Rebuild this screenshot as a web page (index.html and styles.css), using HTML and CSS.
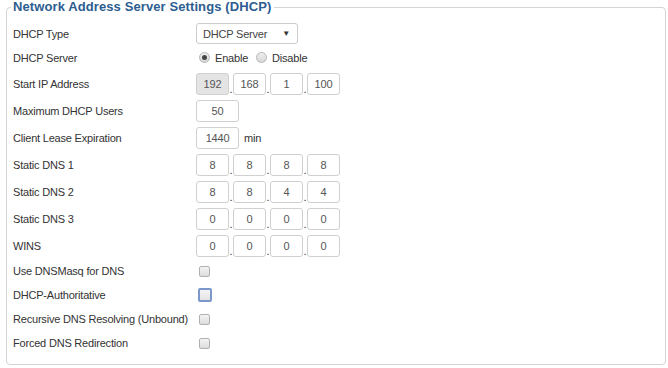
FILE: index.html
```html
<!DOCTYPE html>
<html lang="en">
<head>
    <meta charset="UTF-8">
    <title>DHCP Settings</title>
    <link rel="stylesheet" href="styles.css">
</head>
<body>
    <fieldset class="settings">
        <legend>Network Address Server Settings (DHCP)</legend>

        <div class="row row-select">
            <span class="label">DHCP Type</span>
            <div class="select"><span>DHCP Server</span><span class="arrow">&#9660;</span></div>
        </div>

        <div class="row row-radio">
            <span class="label">DHCP Server</span>
            <span class="radio checked"></span><span class="opt">Enable</span>
            <span class="radio"></span><span class="opt">Disable</span>
        </div>

        <div class="row row-input">
            <span class="label">Start IP Address</span>
            <span class="box disabled">192</span><span class="dot">.</span>
            <span class="box">168</span><span class="dot">.</span>
            <span class="box">1</span><span class="dot">.</span>
            <span class="box">100</span>
        </div>

        <div class="row row-input">
            <span class="label">Maximum DHCP Users</span>
            <span class="box wide">50</span>
        </div>

        <div class="row row-input">
            <span class="label">Client Lease Expiration</span>
            <span class="box wide">1440</span><span class="unit">min</span>
        </div>

        <div class="row row-input">
            <span class="label">Static DNS 1</span>
            <span class="box">8</span><span class="dot">.</span>
            <span class="box">8</span><span class="dot">.</span>
            <span class="box">8</span><span class="dot">.</span>
            <span class="box">8</span>
        </div>

        <div class="row row-input">
            <span class="label">Static DNS 2</span>
            <span class="box">8</span><span class="dot">.</span>
            <span class="box">8</span><span class="dot">.</span>
            <span class="box">4</span><span class="dot">.</span>
            <span class="box">4</span>
        </div>

        <div class="row row-input">
            <span class="label">Static DNS 3</span>
            <span class="box">0</span><span class="dot">.</span>
            <span class="box">0</span><span class="dot">.</span>
            <span class="box">0</span><span class="dot">.</span>
            <span class="box">0</span>
        </div>

        <div class="row row-input">
            <span class="label">WINS</span>
            <span class="box">0</span><span class="dot">.</span>
            <span class="box">0</span><span class="dot">.</span>
            <span class="box">0</span><span class="dot">.</span>
            <span class="box">0</span>
        </div>

        <div class="row row-check">
            <span class="label">Use DNSMasq for DNS</span>
            <span class="check"></span>
        </div>

        <div class="row row-check">
            <span class="label">DHCP-Authoritative</span>
            <span class="check focused"></span>
        </div>

        <div class="row row-check">
            <span class="label">Recursive DNS Resolving (Unbound)</span>
            <span class="check"></span>
        </div>

        <div class="row row-check">
            <span class="label">Forced DNS Redirection</span>
            <span class="check"></span>
        </div>
    </fieldset>
</body>
</html>
```

FILE: styles.css
```css
/* Page */
body {
    margin: 0;
    background: #fff;
    font-family: "Liberation Sans", Arial, sans-serif;
    font-size: 11px;
    letter-spacing: -0.2px;
    color: #333;
}

/* Fieldset box */
.settings {
    margin: 0 2px 0 6px;
    padding: 8px 0 10px 0;
    height: 365px;
    box-sizing: border-box;
    border: 1px solid #d4d4d4;
    border-radius: 4px;
}

.settings legend {
    margin-left: 4px;
    padding: 0 3px 0 2px;
    font-weight: bold;
    font-size: 13px;
    letter-spacing: 0.1px;
    line-height: 14px;
    color: #2d5d8f;
}

/* Rows */
.row {
    display: flex;
    align-items: center;
    padding-left: 6px;
    white-space: nowrap;
}

.row-select { height: 23px; }
.row-radio { height: 25px; }
.row-input { height: 27px; }
.row-check { height: 24px; }

.label {
    width: 183px;
    flex-shrink: 0;
}

/* Fake select */
.select {
    width: 87px;
    height: 19px;
    border: 1px solid #ccc;
    border-radius: 3px;
    display: flex;
    align-items: center;
    justify-content: space-between;
    padding: 0 7px 0 6px;
    color: #444;
}

.select .arrow {
    font-size: 8px;
    color: #333;
}

/* Radios */
.radio {
    width: 9px;
    height: 9px;
    border: 1px solid #b5b5b5;
    border-radius: 50%;
    background: linear-gradient(#eee, #d8d8d8);
    margin: 0 5px 0 3px;
    position: relative;
}

.radio.checked::after {
    content: "";
    position: absolute;
    left: 2px;
    top: 2px;
    width: 5px;
    height: 5px;
    border-radius: 50%;
    background: #444;
}

.opt {
    margin-right: 5px;
}

/* Text boxes */
.box {
    width: 31px;
    height: 20px;
    border: 1px solid #d0d0d0;
    border-radius: 3px;
    display: flex;
    align-items: center;
    justify-content: center;
    color: #555;
}

.box.wide {
    width: 41px;
}

.box.disabled {
    background: #e4e4e4;
}

.dot {
    width: 4px;
    text-align: center;
    align-self: flex-end;
    margin-bottom: 3px;
    line-height: 10px;
}

.unit {
    margin-left: 5px;
}

/* Checkboxes */
.check {
    width: 9px;
    height: 9px;
    margin-left: 3px;
    border: 1px solid #b0b0b0;
    border-radius: 2px;
    background: linear-gradient(#f4f4f4, #dcdcdc);
}

.check.focused {
    width: 10px;
    height: 10px;
    margin-left: 2px;
    border: 2px solid #7c97c9;
    background: linear-gradient(#f4f4f4, #e4e4e4);
}
```
